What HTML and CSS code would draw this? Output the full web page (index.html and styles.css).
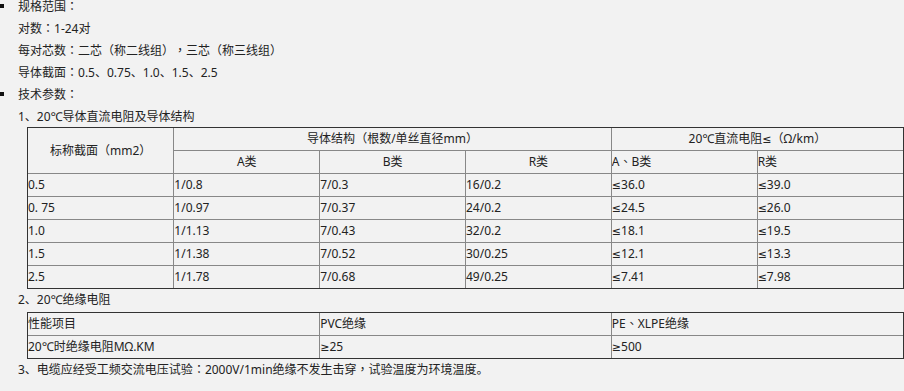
FILE: index.html
```html
<!DOCTYPE html>
<html lang="zh-CN">
<head>
<meta charset="utf-8">
<title>规格参数</title>
<link rel="stylesheet" href="styles.css">
</head>
<body>
<div class="doc">
  <div class="item first"><span class="bullet"></span><span>规格范围<span class="fw">：</span></span></div>
  <p class="line">对数<span class="fw">：</span>1-24对</p>
  <p class="line">每对芯数<span class="fw">：</span>二芯<span class="fw">（</span>称二线组<span class="fw">）</span><span class="fw">，</span>三芯<span class="fw">（</span>称三线组<span class="fw">）</span></p>
  <p class="line">导体截面<span class="fw">：</span>0.5、0.75、1.0、1.5、2.5</p>
  <div class="item"><span class="bullet"></span><span>技术参数<span class="fw">：</span></span></div>
  <p class="line">1、20℃导体直流电阻及导体结构</p>
  <div class="tbox tbox-1">
    <table class="grid six">
      <colgroup><col><col><col><col><col><col></colgroup>
      <tr>
        <td rowspan="2" class="c">标称截面<span class="fw">（</span>mm2<span class="fw">）</span></td>
        <td colspan="3" class="c">导体结构<span class="fw">（</span>根数/单丝直径mm<span class="fw">）</span></td>
        <td colspan="2" class="c">20℃直流电阻<span class="sym">≤</span><span class="fw">（</span>Ω/km<span class="fw">）</span></td>
      </tr>
      <tr>
        <td class="c">A类</td>
        <td class="c">B类</td>
        <td class="c">R类</td>
        <td>A、B类</td>
        <td>R类</td>
      </tr>
      <tr><td>0.5</td><td>1/0.8</td><td>7/0.3</td><td>16/0.2</td><td><span class="sym">≤</span>36.0</td><td><span class="sym">≤</span>39.0</td></tr>
      <tr><td>0. 75</td><td>1/0.97</td><td>7/0.37</td><td>24/0.2</td><td><span class="sym">≤</span>24.5</td><td><span class="sym">≤</span>26.0</td></tr>
      <tr><td>1.0</td><td>1/1.13</td><td>7/0.43</td><td>32/0.2</td><td><span class="sym">≤</span>18.1</td><td><span class="sym">≤</span>19.5</td></tr>
      <tr><td>1.5</td><td>1/1.38</td><td>7/0.52</td><td>30/0.25</td><td><span class="sym">≤</span>12.1</td><td><span class="sym">≤</span>13.3</td></tr>
      <tr><td>2.5</td><td>1/1.78</td><td>7/0.68</td><td>49/0.25</td><td><span class="sym">≤</span>7.41</td><td><span class="sym">≤</span>7.98</td></tr>
    </table>
  </div>
  <p class="line">2、20℃绝缘电阻</p>
  <div class="tbox tbox-2">
    <table class="grid three">
      <colgroup><col><col><col></colgroup>
      <tr><td>性能项目</td><td>PVC绝缘</td><td>PE、XLPE绝缘</td></tr>
      <tr><td>20℃时绝缘电阻MΩ.KM</td><td><span class="sym">≥</span>25</td><td><span class="sym">≥</span>500</td></tr>
    </table>
  </div>
  <p class="line">3、电缆应经受工频交流电压试验<span class="fw">：</span>2000V/1min绝缘不发生击穿<span class="fw">，</span>试验温度为环境温度。</p>
</div>
</body>
</html>
```
FILE: styles.css
```css
html, body {
  margin: 0;
  padding: 0;
  background: #f2f2f2;
}
body {
  font-family: "Noto Sans", "Noto Sans CJK TC", "Noto Sans CJK SC", sans-serif;
  font-size: 12px;
  color: #222;
  width: 904px;
  overflow: hidden;
}
.doc {
  line-height: 22px;
}
.item {
  display: flex;
  align-items: center;
  gap: 14px;
  height: 22px;
}
.item.first {
  height: 18px;
  line-height: 14px;
  align-items: flex-start;
}
.item.first .bullet {
  margin-top: 4px;
}
.bullet {
  width: 4px;
  height: 4px;
  background: #111;
  flex: none;
  margin-top: -2px;
}
.line {
  margin: 0;
  padding-left: 18px;
  height: 22px;
}
.fw {
  display: inline-block;
  width: 12px;
  text-align: center;
}
.sym {
  font-family: "DejaVu Sans", sans-serif;
  font-size: 11px;
  line-height: 0;
}
.tbox {
  margin-left: 27px;
  width: 875px;
  border: 1px solid #333;
}
.tbox-1 {
  margin-top: -1px;
}
.tbox-2 {
  margin-top: 1px;
}
.grid {
  width: 100%;
  table-layout: fixed;
  border-collapse: collapse;
  border-style: hidden;
}
.grid td {
  border: 1px solid #888;
  height: 22px;
  padding: 0;
  line-height: 22px;
  text-align: left;
  white-space: nowrap;
  overflow: hidden;
  vertical-align: middle;
}
.grid td.c {
  text-align: center;
}
```
